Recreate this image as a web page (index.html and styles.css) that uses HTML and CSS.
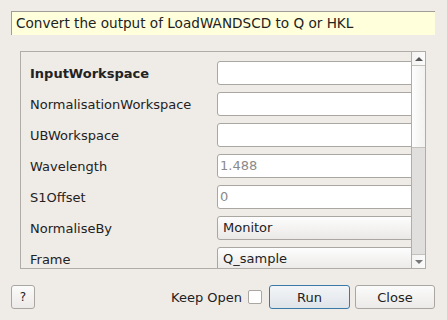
FILE: index.html
```html
<!DOCTYPE html>
<html lang="en">
<head>
  <meta charset="UTF-8">
  <title>LoadWANDSCD</title>
  <link rel="stylesheet" href="styles.css">
</head>
<body>
  <div class="dialog">
    <div class="description">Convert the output of LoadWANDSCD to Q or HKL</div>
    <div class="scroll-area">
      <div class="viewport">
        <div class="prop">
          <label class="prop-name bold">InputWorkspace</label>
          <div class="field"></div>
        </div>
        <div class="prop">
          <label class="prop-name">NormalisationWorkspace</label>
          <div class="field"></div>
        </div>
        <div class="prop">
          <label class="prop-name">UBWorkspace</label>
          <div class="field"></div>
        </div>
        <div class="prop">
          <label class="prop-name">Wavelength</label>
          <div class="field placeholder">1.488</div>
        </div>
        <div class="prop">
          <label class="prop-name">S1Offset</label>
          <div class="field placeholder">0</div>
        </div>
        <div class="prop">
          <label class="prop-name">NormaliseBy</label>
          <div class="field combo">Monitor</div>
        </div>
        <div class="prop">
          <label class="prop-name">Frame</label>
          <div class="field combo">Q_sample</div>
        </div>
      </div>
      <div class="scrollbar">
        <div class="sb-btn"><span class="arrow-up"></span></div>
        <div class="sb-handle"></div>
        <div class="sb-trough"></div>
        <div class="sb-btn down"><span class="arrow-down"></span></div>
      </div>
    </div>
    <div class="buttons">
      <button class="btn help">?</button>
      <div class="spacer"></div>
      <label class="keep-open">Keep Open <span class="check"></span></label>
      <button class="btn run">Run</button>
      <button class="btn close">Close</button>
    </div>
  </div>
</body>
</html>
```

FILE: styles.css
```css
body {
  margin: 0;
  background: #efebe7;
  font-family: 'DejaVu Sans', sans-serif;
  font-size: 13px;
  color: #222;
}
.dialog {
  width: 447px;
  height: 320px;
  box-sizing: border-box;
  padding: 11px 12px 0 11px;
  display: flex;
  flex-direction: column;
}
.description {
  height: 24px;
  box-sizing: border-box;
  background: #ffffdc;
  border-top: 1px solid #a09c98;
  border-left: 1px solid #a09c98;
  padding-left: 4px;
  line-height: 22px;
  font-size: 13.6px;
  white-space: nowrap;
}
.scroll-area {
  margin: 16px 9px 0 9px;
  height: 218px;
  box-sizing: border-box;
  border: 1px solid #b0aca8;
  display: flex;
}
.viewport {
  flex: 1;
  overflow: hidden;
  padding: 9px 0 0 9px;
  display: flex;
  flex-direction: column;
  gap: 7px;
}
.prop {
  display: flex;
  align-items: center;
  flex-shrink: 0;
}
.prop-name {
  width: 187px;
  flex-shrink: 0;
  white-space: nowrap;
}
.bold {
  font-weight: bold;
}
.field {
  width: 220px;
  flex-shrink: 0;
  height: 24px;
  box-sizing: border-box;
  background: #fff;
  border: 1px solid #aaa6a2;
  border-radius: 3px;
  padding-left: 2px;
  line-height: 22px;
}
.placeholder {
  color: #8a8a8a;
}
.combo {
  background: linear-gradient(#fdfdfd, #ebe9e7);
  padding-left: 5px;
  color: #222;
}
.scrollbar {
  width: 14px;
  box-sizing: border-box;
  border-left: 1px solid #b0aca8;
  display: flex;
  flex-direction: column;
}
.sb-btn {
  height: 14px;
  box-sizing: border-box;
  border-bottom: 1px solid #c4c0bc;
  background: linear-gradient(90deg, #f4f3f2, #fbfbfb);
  display: flex;
  align-items: center;
  justify-content: center;
}
.sb-btn.down {
  border-bottom: none;
  border-top: 1px solid #c4c0bc;
}
.arrow-up {
  width: 0;
  height: 0;
  border-left: 4px solid transparent;
  border-right: 4px solid transparent;
  border-bottom: 4px solid #555;
}
.arrow-down {
  width: 0;
  height: 0;
  border-left: 4px solid transparent;
  border-right: 4px solid transparent;
  border-top: 4px solid #777;
}
.sb-handle {
  height: 82px;
  box-sizing: border-box;
  border-bottom: 1px solid #c4c0bc;
  background: linear-gradient(90deg, #fdfdfd, #f2f1f0);
}
.sb-trough {
  flex: 1;
  background: #e0dfdd;
}
.buttons {
  margin-top: 16px;
  height: 24px;
  display: flex;
  align-items: center;
}
.spacer {
  flex: 1;
}
.btn {
  height: 24px;
  box-sizing: border-box;
  border: 1px solid #aaa6a2;
  border-radius: 3px;
  background: linear-gradient(#fbfbfb, #eceae8);
  font-family: 'DejaVu Sans', sans-serif;
  font-size: 13px;
  color: #222;
  padding: 0;
}
.help {
  width: 24px;
  font-size: 12px;
}
.keep-open {
  display: flex;
  align-items: center;
  gap: 6px;
  margin-right: 7px;
}
.check {
  width: 14px;
  height: 14px;
  box-sizing: border-box;
  background: #fff;
  border: 1px solid #aaa6a2;
  border-radius: 2px;
}
.run {
  width: 81px;
  border-color: #3b79a8;
  background: linear-gradient(#f3f5f7, #dfe4e9);
}
.close {
  width: 80px;
  margin-left: 5px;
}
```
